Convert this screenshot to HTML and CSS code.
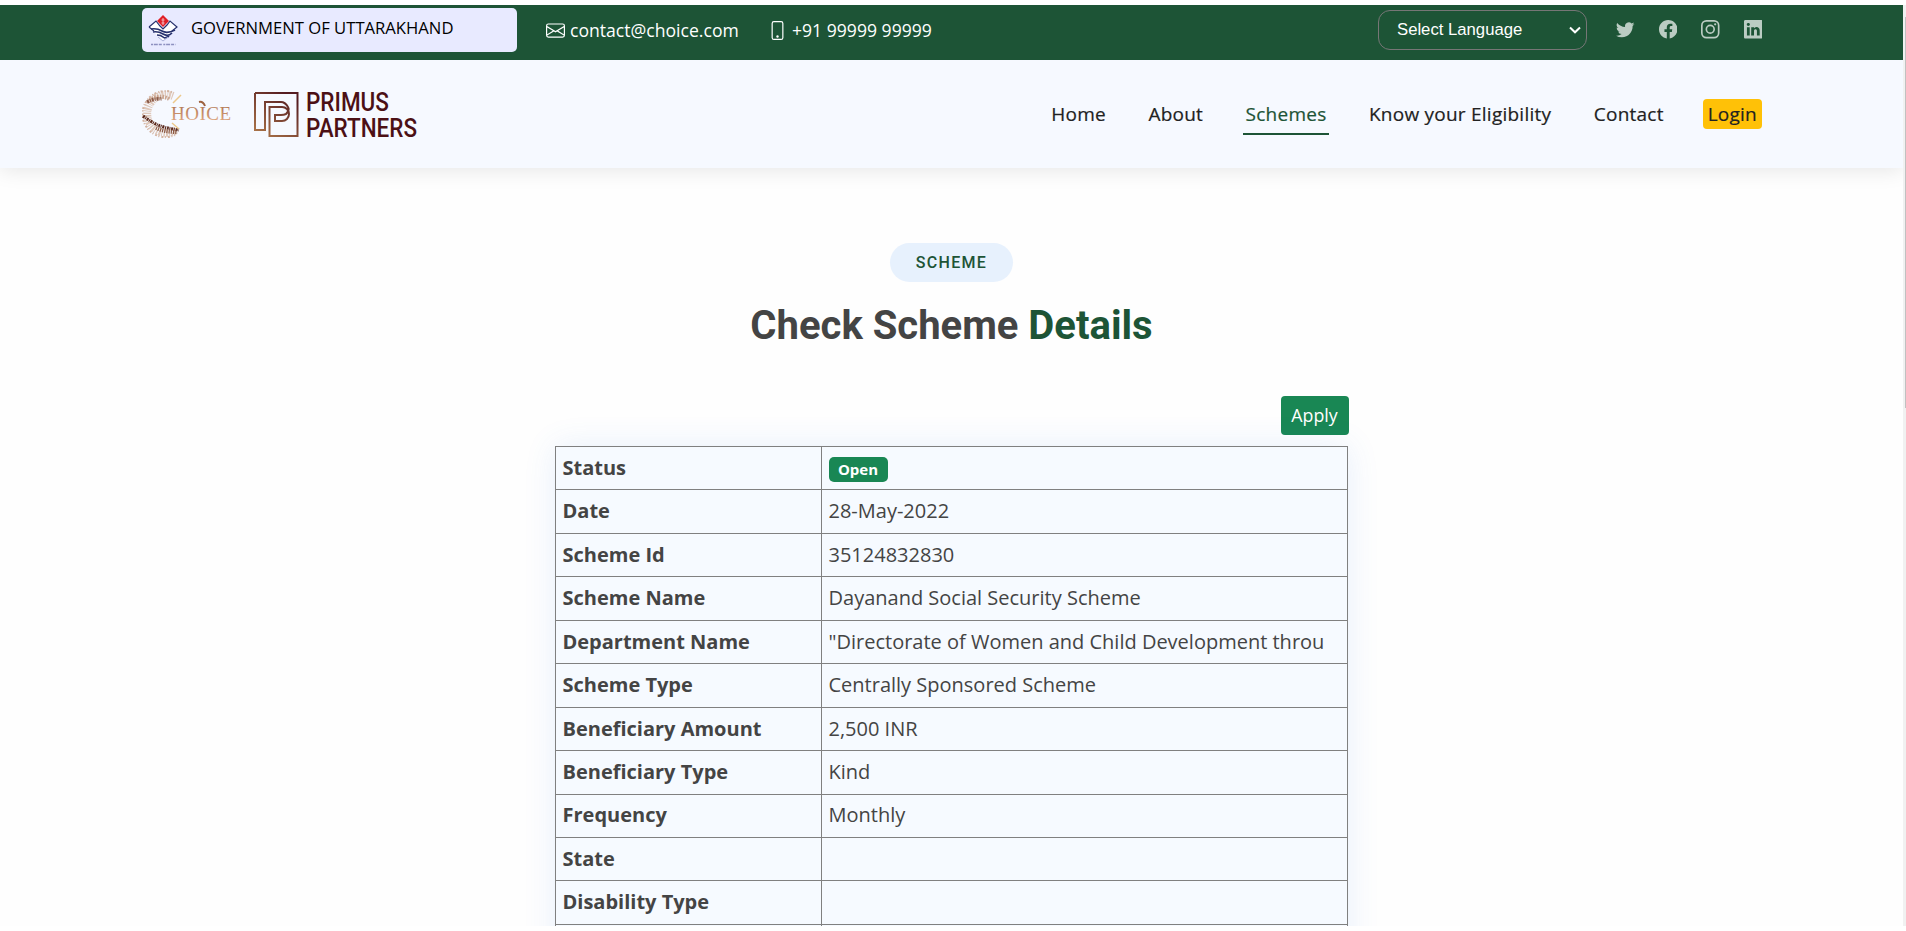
FILE: index.html
```html
<!DOCTYPE html>
<html lang="en">
<head>
<meta charset="utf-8">
<title>Scheme Details</title>
<link rel="stylesheet" href="styles.css">
</head>
<body>
<div class="window">
<div class="page">
  <div class="topbar">
    <div class="gov">
      <svg class="emblem" width="30" height="32" viewBox="0 0 30 32">
        <path d="M1 12l7-6 4 5 3 3 4-4 4-4 6 6-14 14z" fill="#fff"/>
        <path d="M1 12l7-6 4 5 3 3 4-4 3-4 7 6-5 4M1 12l5 4" fill="none" stroke="#27316e" stroke-width="1.200"/>
        <path d="M3 14q6-1 11 2t13-1M5 17q5-1 10 2t9-1M9 20q4 0 6 2t6-1" fill="none" stroke="#27316e" stroke-width="1.700"/>
        <path d="M10 22l5 4 5-4" fill="none" stroke="#a9b0d8" stroke-width="1"/>
        <path d="M15 0l6 6-6 6-6-6z" fill="#e01f26"/><path d="M15 3v7M13.500 5h3M13.500 8h3" stroke="#f4b9bd" stroke-width="1"/>
        <path d="M3 29.500h25" stroke="#8d90c0" stroke-width="1.500" stroke-dasharray="2 .8 4 1 3 1.500"/>
      </svg>
      <span class="gov-name">GOVERNMENT OF UTTARAKHAND</span>
    </div>
    <div class="contact mail">
      <svg width="19" height="19" viewBox="0 0 16 16" fill="currentColor"><path d="M0 4a2 2 0 0 1 2-2h12a2 2 0 0 1 2 2v8a2 2 0 0 1-2 2H2a2 2 0 0 1-2-2V4Zm2-1a1 1 0 0 0-1 1v.217l7 4.200 7-4.200V4a1 1 0 0 0-1-1H2Zm13 2.383-4.708 2.825L15 11.105V5.383Zm-.034 6.876-5.640-3.471L8 9.583l-1.326-.795-5.640 3.470A1 1 0 0 0 2 13h12a1 1 0 0 0 .966-.741ZM1 11.105l4.708-2.897L1 5.383v5.722Z"/></svg>
      <span class="contact-text">contact@choice.com</span>
    </div>
    <div class="contact phone">
      <svg width="19" height="19" viewBox="0 0 16 16" fill="currentColor"><path d="M11 1a1 1 0 0 1 1 1v12a1 1 0 0 1-1 1H5a1 1 0 0 1-1-1V2a1 1 0 0 1 1-1h6zM5 0a2 2 0 0 0-2 2v12a2 2 0 0 0 2 2h6a2 2 0 0 0 2-2V2a2 2 0 0 0-2-2H5z"/><path d="M8 14a1 1 0 1 0 0-2 1 1 0 0 0 0 2z"/></svg>
      <span class="contact-text">+91 99999 99999</span>
    </div>
    <div class="language">
      <span class="language-text">Select Language</span>
      <svg width="12" height="8" viewBox="0 0 12 8"><path d="M1 1.500l5 4.800 5-4.800" fill="none" stroke="#fff" stroke-width="2"/></svg>
    </div>
    <div class="social">
      <svg viewBox="0 0 16 16"><path d="M5.026 15c6.038 0 9.341-5.003 9.341-9.334 0-.140 0-.282-.006-.422A6.685 6.685 0 0 0 16 3.542a6.658 6.658 0 0 1-1.889.518 3.301 3.301 0 0 0 1.447-1.817 6.533 6.533 0 0 1-2.087.793A3.286 3.286 0 0 0 7.875 6.030a9.325 9.325 0 0 1-6.767-3.429 3.289 3.289 0 0 0 1.018 4.382A3.323 3.323 0 0 1 .640 6.575v.045a3.288 3.288 0 0 0 2.632 3.218 3.203 3.203 0 0 1-.865.115 3.230 3.230 0 0 1-.614-.057 3.283 3.283 0 0 0 3.067 2.277A6.588 6.588 0 0 1 .780 13.580a6.320 6.320 0 0 1-.780-.045A9.344 9.344 0 0 0 5.026 15z"/></svg>
      <svg viewBox="0 0 16 16"><path d="M16 8.049c0-4.446-3.582-8.050-8-8.050C3.580 0-.002 3.603-.002 8.050c0 4.017 2.926 7.347 6.750 7.951v-5.625h-2.030V8.050H6.750V6.275c0-2.017 1.195-3.131 3.022-3.131.876 0 1.791.157 1.791.157v1.980h-1.009c-.993 0-1.303.621-1.303 1.258v1.510h2.218l-.354 2.326H9.250V16c3.824-.604 6.750-3.934 6.750-7.951z"/></svg>
      <svg viewBox="0 0 16 16"><path fill-rule="evenodd" d="M4.700 0h6.600A4.700 4.700 0 0 1 16 4.700v6.600a4.700 4.700 0 0 1-4.700 4.700H4.700A4.700 4.700 0 0 1 0 11.300V4.700A4.700 4.700 0 0 1 4.700 0zm0 1.450A3.250 3.250 0 0 0 1.450 4.700v6.600a3.250 3.250 0 0 0 3.250 3.250h6.600a3.250 3.250 0 0 0 3.250-3.250V4.700a3.250 3.250 0 0 0-3.250-3.250zM8 3.890a4.110 4.110 0 1 1 0 8.220 4.110 4.110 0 0 1 0-8.220zm0 1.440a2.670 2.670 0 1 0 0 5.340 2.670 2.670 0 0 0 0-5.340z"/><circle cx="12.270" cy="3.730" r=".960"/></svg>
      <svg viewBox="0 0 16 16"><path d="M0 1.146C0 .513.526 0 1.175 0h13.650C15.474 0 16 .513 16 1.146v13.708c0 .633-.526 1.146-1.175 1.146H1.175C.526 16 0 15.487 0 14.854V1.146zm4.943 12.248V6.169H2.542v7.225h2.401zm-1.200-8.212c.837 0 1.358-.554 1.358-1.248-.015-.709-.520-1.248-1.342-1.248-.822 0-1.359.540-1.359 1.248 0 .694.521 1.248 1.327 1.248h.016zm4.908 8.212V9.359c0-.216.016-.432.080-.586.173-.431.568-.878 1.232-.878.869 0 1.216.662 1.216 1.634v3.865h2.401V9.250c0-2.220-1.184-3.252-2.764-3.252-1.274 0-1.845.700-2.165 1.193v.025h-.016l.016-.025V6.169h-2.400c.030.678 0 7.225 0 7.225h2.400z"/></svg>
    </div>
  </div>

  <div class="header">
    <svg class="choice" width="94" height="52" viewBox="0 0 94 52">
      <defs><linearGradient id="copper" x1="0" y1="0" x2="0" y2="1"><stop offset="0" stop-color="#a9704e"/><stop offset="1" stop-color="#e6ad86"/></linearGradient></defs>
      <g fill="none">
        <path d="M31 8A19 19 0 1 0 34 42" stroke="#dfc8ba" stroke-width="8" stroke-dasharray="1.300 1 2 .8 .8 1.200"/>
        <path d="M30 4A23 23 0 1 0 33 47" stroke="#d3b3a0" stroke-width="2" stroke-dasharray="1 2 2 1.500"/>
        <path d="M27 11A17 17 0 0 0 6 14" stroke="#c9a48e" stroke-width="4" stroke-dasharray="1.500 1.200"/>
        <path d="M5 14q8-4 15-3" stroke="#8a5a48" stroke-width="3.500" stroke-dasharray="2 1 1 1"/>
        <path d="M1 28q8 6 15 9t21 5" stroke="#5a281c" stroke-width="3" stroke-dasharray="2 .7 1 .8"/>
        <path d="M14 40q9 4 21 4" stroke="#8c5b46" stroke-width="4" stroke-dasharray="1.200 1"/>
        <path d="M31 15l8-8M30 35l7 6" stroke="#ecc98c" stroke-width="1.500"/>
        <path d="M57 14q4-1 6 4" stroke="#9d623f" stroke-width="2"/>
      </g>
      <text class="choice-text" x="29" y="32" textLength="60" lengthAdjust="spacing" fill="url(#copper)">HOICE</text>
    </svg>
    <svg class="primus" width="170" height="64" viewBox="0 -8 170 64">
      <defs><linearGradient id="bronze" x1="0" y1="1" x2=".7" y2="0"><stop offset="0" stop-color="#b07a4c"/><stop offset="1" stop-color="#551c20"/></linearGradient></defs>
      <path d="M1 3H43.500V46H15.500V17H28a7 7 0 0 1 7 7 7 7 0 0 1-7 7h-7v-6h6M1 3V40H11V12H27q4 0 7 5 2 3-2 7-2 1-5 1h-6" fill="none" stroke="url(#bronze)" stroke-width="2"/>
      <text class="primus-text" x="52" y="21" textLength="83" lengthAdjust="spacingAndGlyphs">PRIMUS</text>
      <text class="primus-text" x="52" y="46.500" textLength="111" lengthAdjust="spacingAndGlyphs">PARTNERS</text>
    </svg>
    <div class="nav">
      <span>Home</span>
      <span>About</span>
      <span class="active">Schemes</span>
      <span>Know your Eligibility</span>
      <span>Contact</span>
      <span class="login">Login</span>
    </div>
  </div>

  <div class="content">
    <div class="pill">SCHEME</div>
    <div class="title">Check Scheme <span class="accent">Details</span></div>
    <div class="apply">Apply</div>
    <table class="details">
      <tr><th>Status</th><td><span class="badge">Open</span></td></tr>
      <tr><th>Date</th><td>28-May-2022</td></tr>
      <tr><th>Scheme Id</th><td>35124832830</td></tr>
      <tr><th>Scheme Name</th><td>Dayanand Social Security Scheme</td></tr>
      <tr><th>Department Name</th><td>"Directorate of Women and Child Development throu</td></tr>
      <tr><th>Scheme Type</th><td>Centrally Sponsored Scheme</td></tr>
      <tr><th>Beneficiary Amount</th><td>2,500 INR</td></tr>
      <tr><th>Beneficiary Type</th><td>Kind</td></tr>
      <tr><th>Frequency</th><td>Monthly</td></tr>
      <tr><th>State</th><td></td></tr>
      <tr><th>Disability Type</th><td></td></tr>
      <tr><th></th><td></td></tr>
    </table>
  </div>
</div>
<div class="scrollbar"><div class="thumb"></div></div>
</div>
</body>
</html>
```

FILE: styles.css
```css
* { box-sizing: border-box; }
body { margin: 0; background: #fff; font-family: "Open Sans", "Noto Sans", sans-serif; color: #444; overflow: hidden; }
.window { width: 1906px; height: 931px; padding: 5px 0; display: flex; }
.page { width: 1903px; height: 921px; overflow: hidden; background: #fefefe; }
svg { display: block; flex: none; }

.topbar { position: relative; z-index: 2; height: 55px; background: #1d5436; padding: 0 141px 0 142px; display: flex; align-items: flex-start; color: #fff; }
.gov { width: 375px; height: 44px; margin-top: 3px; background: #e8eaff; border-radius: 5px; display: flex; padding: 7px 6px; color: #000; }
.gov-name { margin-left: 13px; font-size: 16.650px; line-height: 26px; white-space: nowrap; }
.contact { display: flex; align-items: center; height: 50px; font-size: 17.600px; white-space: nowrap; }
.mail { margin-left: 29px; width: 222px; gap: 5px; }
.phone { gap: 5px; }
.language { margin: 5px 0 0 auto; width: 209px; height: 40px; border: 1px solid #767676; border-radius: 12px; padding: 0 5px 0 18px; display: flex; align-items: center; justify-content: space-between; font-family: "Liberation Sans", Arial, sans-serif; font-size: 16.700px; }
.language-text { line-height: 20px; margin-top: -1px; }
.social { display: flex; gap: 24px; margin: 15px 0 0 29px; }
.social svg { width: 18.500px; height: 18.500px; fill: #bbccc3; }

.header { height: 108px; background: #f6f9ff; box-shadow: 0 2px 20px rgba(0, 0, 0, .1); padding: 0 141px 0 142px; display: flex; align-items: center; position: relative; z-index: 1; }
.choice-text { font: 19px "Liberation Serif", serif; }
.primus { margin-left: 18px; }
.primus-text { font: 500 25px Roboto, sans-serif; fill: #4c1015; }
.nav { margin-left: auto; display: flex; align-items: center; font-size: 19px; letter-spacing: .240px; font-weight: 500; color: #222; -webkit-text-stroke: .2px currentColor; white-space: nowrap; }
.nav span { margin-left: 36.500px; padding: 0 3px; height: 41px; line-height: 40px; }
.nav .active { color: #1d5436; border-bottom: 2px solid #1d5436; }
.nav .login { background: #ffc107; border-radius: 4px; padding: 0 5px 0 4.500px; height: 30px; line-height: 30px; }

.content { width: 794px; margin: 0 auto; padding-top: 75px; display: flex; flex-direction: column; align-items: center; }
.pill { width: 123px; height: 39px; border-radius: 20px; background: #e7f1fd; color: #1d5436; font: 500 16px/39px Roboto, sans-serif; letter-spacing: 1.300px; text-align: center; }
.title { margin-top: 20px; font: 700 40px/48px Roboto, sans-serif; white-space: nowrap; }
.accent { color: #1d5436; }
.apply { align-self: flex-end; margin-top: 46px; width: 68px; height: 39px; border-radius: 4px; background: #198754; color: #fff; font-size: 17.800px; line-height: 39px; text-align: center; }
.details { width: 793px; margin-top: 11px; align-self: flex-start; table-layout: fixed; border-collapse: collapse; background: #f6faff; box-shadow: 0 0 30px rgba(65, 132, 234, .12); font-size: 20px; white-space: nowrap; }
.details tr { height: 43.450px; }
.details th, .details td { border: 1px solid #808080; padding: 0 7px .5px; text-align: left; line-height: 30px; }
.details th { width: 266px; font-weight: 700; }
.details td { font-weight: 400; }
.badge { display: block; width: 59px; height: 25px; margin-top: 4px; border-radius: 5px; background: #198754; color: #fff; font-size: 15px; font-weight: 700; line-height: 25px; text-align: center; }

.scrollbar { width: 3px; height: 921px; background: #f1f1f1; padding: 12px 0 0 2px; }
.thumb { width: 1px; height: 391px; background: #c1c1c1; }
```
